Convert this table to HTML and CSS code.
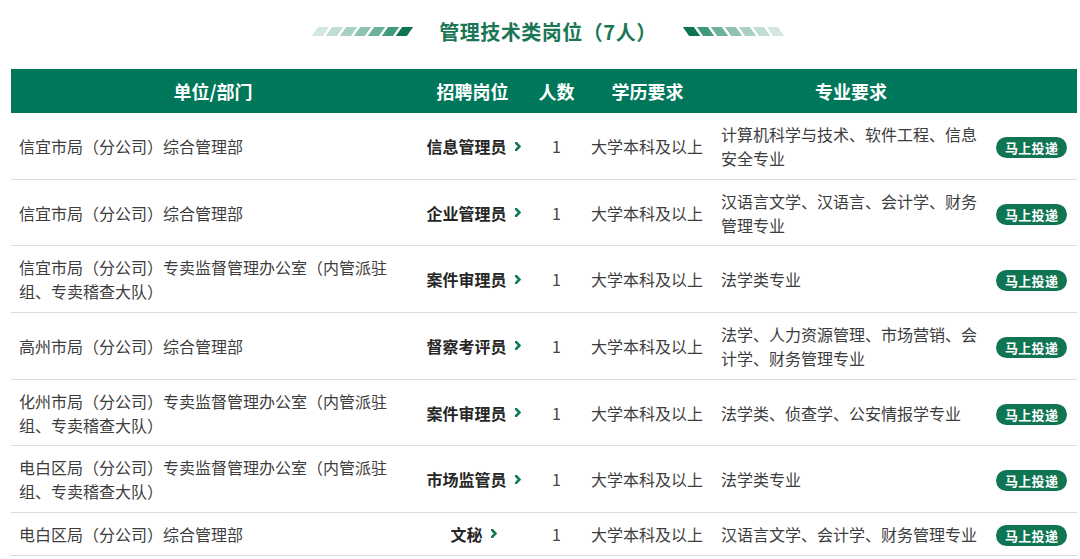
FILE: index.html
```html
<!DOCTYPE html>
<html lang="zh">
<head>
<meta charset="utf-8">
<link rel="stylesheet" href="styles.css">
</head>
<body>
<div class="title">
  <div class="bars bars-left">
    <span class="b1"></span><span class="b2"></span><span class="b3"></span><span class="b4"></span><span class="b5"></span><span class="b6"></span><span class="b7"></span>
  </div>
  <h2 class="title-text">管理技术类岗位（7人）</h2>
  <div class="bars bars-right">
    <span class="b7"></span><span class="b6"></span><span class="b5"></span><span class="b4"></span><span class="b3"></span><span class="b2"></span><span class="b1"></span>
  </div>
</div>

<div class="wrap">
<table class="jobs">
  <colgroup>
    <col class="c-unit"><col class="c-post"><col class="c-num"><col class="c-edu"><col class="c-major"><col class="c-btn">
  </colgroup>
  <thead>
    <tr><th>单位/部门</th><th>招聘岗位</th><th>人数</th><th>学历要求</th><th>专业要求</th><th></th></tr>
  </thead>
  <tbody>
    <tr>
      <td class="unit">信宜市局（分公司）综合管理部</td>
      <td class="post"><span class="post-in">信息管理员<svg class="arr" viewBox="0 0 6 9"><path d="M1 1 L4.5 4.5 L1 8" /></svg></span></td>
      <td class="num">1</td>
      <td class="edu">大学本科及以上</td>
      <td class="major">计算机科学与技术、软件工程、信息安全专业</td>
      <td class="act"><span class="btn">马上投递</span></td>
    </tr>
    <tr>
      <td class="unit">信宜市局（分公司）综合管理部</td>
      <td class="post"><span class="post-in">企业管理员<svg class="arr" viewBox="0 0 6 9"><path d="M1 1 L4.5 4.5 L1 8" /></svg></span></td>
      <td class="num">1</td>
      <td class="edu">大学本科及以上</td>
      <td class="major">汉语言文学、汉语言、会计学、财务管理专业</td>
      <td class="act"><span class="btn">马上投递</span></td>
    </tr>
    <tr>
      <td class="unit">信宜市局（分公司）专卖监督管理办公室（内管派驻组、专卖稽查大队）</td>
      <td class="post"><span class="post-in">案件审理员<svg class="arr" viewBox="0 0 6 9"><path d="M1 1 L4.5 4.5 L1 8" /></svg></span></td>
      <td class="num">1</td>
      <td class="edu">大学本科及以上</td>
      <td class="major">法学类专业</td>
      <td class="act"><span class="btn">马上投递</span></td>
    </tr>
    <tr>
      <td class="unit">高州市局（分公司）综合管理部</td>
      <td class="post"><span class="post-in">督察考评员<svg class="arr" viewBox="0 0 6 9"><path d="M1 1 L4.5 4.5 L1 8" /></svg></span></td>
      <td class="num">1</td>
      <td class="edu">大学本科及以上</td>
      <td class="major">法学、人力资源管理、市场营销、会计学、财务管理专业</td>
      <td class="act"><span class="btn">马上投递</span></td>
    </tr>
    <tr>
      <td class="unit">化州市局（分公司）专卖监督管理办公室（内管派驻组、专卖稽查大队）</td>
      <td class="post"><span class="post-in">案件审理员<svg class="arr" viewBox="0 0 6 9"><path d="M1 1 L4.5 4.5 L1 8" /></svg></span></td>
      <td class="num">1</td>
      <td class="edu">大学本科及以上</td>
      <td class="major">法学类、侦查学、公安情报学专业</td>
      <td class="act"><span class="btn">马上投递</span></td>
    </tr>
    <tr>
      <td class="unit">电白区局（分公司）专卖监督管理办公室（内管派驻组、专卖稽查大队）</td>
      <td class="post"><span class="post-in">市场监管员<svg class="arr" viewBox="0 0 6 9"><path d="M1 1 L4.5 4.5 L1 8" /></svg></span></td>
      <td class="num">1</td>
      <td class="edu">大学本科及以上</td>
      <td class="major">法学类专业</td>
      <td class="act"><span class="btn">马上投递</span></td>
    </tr>
    <tr>
      <td class="unit">电白区局（分公司）综合管理部</td>
      <td class="post"><span class="post-in">文秘<svg class="arr" viewBox="0 0 6 9"><path d="M1 1 L4.5 4.5 L1 8" /></svg></span></td>
      <td class="num">1</td>
      <td class="edu">大学本科及以上</td>
      <td class="major">汉语言文学、会计学、财务管理专业</td>
      <td class="act"><span class="btn">马上投递</span></td>
    </tr>
  </tbody>
</table>
</div>
</body>
</html>
```

FILE: styles.css
```css
* { box-sizing: border-box; }
html, body { margin: 0; padding: 0; background: #fff; }
body {
  width: 1080px;
  font-family: "Noto Sans CJK SC", "Noto Sans", sans-serif;
  color: #3d3d3d;
  overflow: hidden;
}

.title {
  height: 69px;
  display: flex;
  align-items: center;
  justify-content: center;
  padding: 0 0 6px 16px;
  gap: 29px;
}
.title-text {
  margin: 0;
  font-size: 20px;
  line-height: 26px;
  font-weight: 700;
  color: #1a7654;
  letter-spacing: 0.5px;
}
.bars { display: flex; gap: 3px; }
.bars span {
  display: block;
  width: 11px;
  height: 9px;
}
.bars-left span { transform: skewX(-35deg); }
.bars-right span { transform: skewX(35deg); }
.b1 { background: #d4e8df; }
.b2 { background: #c0ddd1; }
.b3 { background: #a8d1c0; }
.b4 { background: #8ec3ad; }
.b5 { background: #6db296; }
.b6 { background: #42997a; }
.b7 { background: #0e7452; }

.wrap { padding: 0 3px 0 11px; }
.jobs {
  width: 1066px;
  border-collapse: collapse;
  table-layout: fixed;
}
.c-unit { width: 404px; }
.c-post { width: 115px; }
.c-num { width: 53px; }
.c-edu { width: 129px; }
.c-major { width: 278px; }
.c-btn { width: 87px; }

.jobs th {
  background: #00765a;
  color: #fff;
  font-size: 18px;
  font-weight: 700;
  height: 44px;
  padding: 0;
  text-align: center;
  line-height: 24px;
}
.jobs td {
  font-size: 16px;
  line-height: 24px;
  padding: 9px 0 8.67px;
  border-bottom: 1px solid #dcdcdc;
  vertical-align: middle;
}
.unit { padding-left: 8px !important; padding-right: 14px !important; }
.post { text-align: center; }
.post-in {
  display: inline-flex;
  align-items: center;
  gap: 8px;
  font-weight: 700;
  color: #262626;
  padding-left: 2px;
}
.arr {
  width: 6px;
  height: 9px;
  fill: none;
  stroke: #0e7a55;
  stroke-width: 2.6;
  stroke-linecap: square;
}
.num { text-align: center; color: #444; }
.edu { padding-left: 8px !important; white-space: nowrap; }
.major { padding-left: 9px !important; padding-right: 12px !important; }
.act { text-align: left; padding-left: 6px !important; }
.btn {
  display: inline-block;
  background: #0f7553;
  color: #fff;
  font-size: 13px;
  font-weight: 700;
  line-height: 21px;
  height: 21px;
  padding: 0 9px;
  border-radius: 10.5px;
  letter-spacing: 0.3px;
}
```
